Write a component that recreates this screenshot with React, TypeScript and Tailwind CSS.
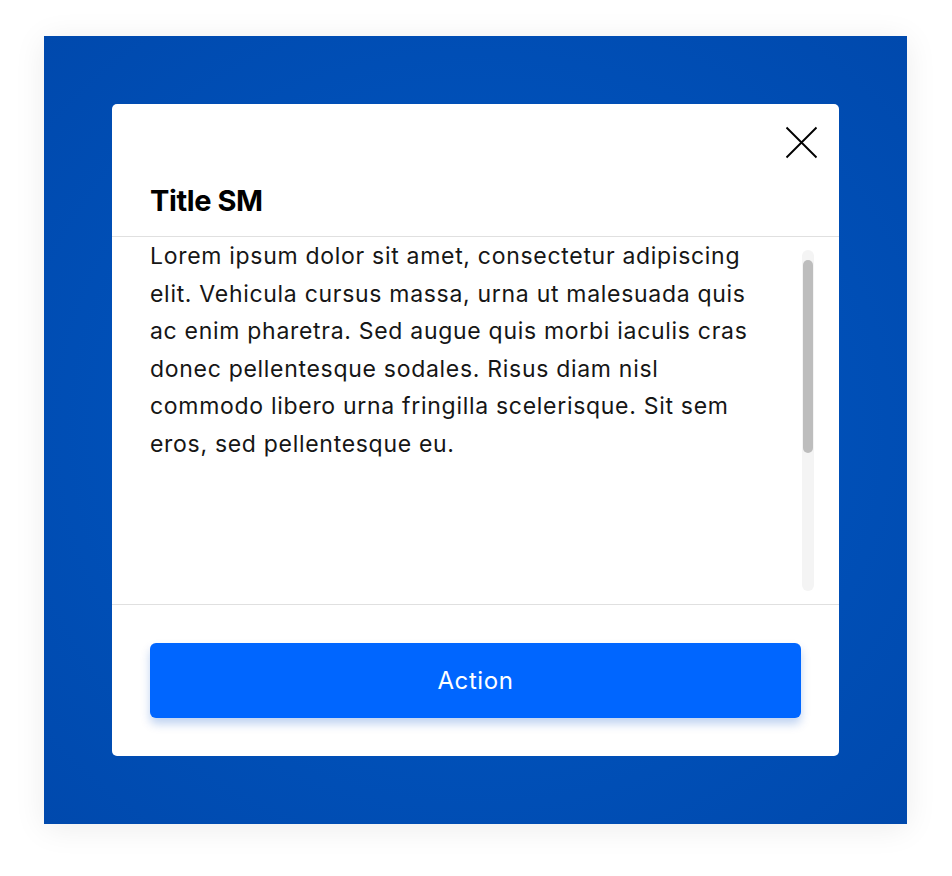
export default function App() {
  return (
    <div className="w-[952px] h-[876px] bg-white pl-[44px] pt-[36px] font-['Inter',sans-serif]">
      <div className="w-[863px] h-[788px] p-[68px] bg-[radial-gradient(ellipse_at_center,#005ccb_0%,#0050b8_55%,#0049ad_100%)] shadow-[0_4px_30px_rgba(0,0,0,0.08)]">
        <div className="relative flex flex-col w-[727px] h-[652px] bg-white rounded-[5px]">
          <button className="absolute top-[22px] right-[21px]">
            <svg className="block" width="33" height="33" viewBox="0 0 33 33" fill="none" stroke="black" strokeWidth="1.9">
              <path d="M1.5 1.5 L31.5 31.5 M31.5 1.5 L1.5 31.5" />
            </svg>
          </button>

          <div className="h-[133px] flex items-end px-[38px] pb-[18px] border-b border-[#e0e0e0]">
            <h2 className="text-[29px] leading-[34px] font-bold text-black tracking-[-0.4px]">
              Title SM
            </h2>
          </div>

          <div className="flex flex-row flex-1 min-h-0">
            <div className="flex-1 pl-[38px] pt-[1px] text-[23px] leading-[37.6px] tracking-[0.7px] text-[#161616]">
              <p>
                Lorem ipsum dolor sit amet, consectetur adipiscing <br />
                elit. Vehicula cursus massa, urna ut malesuada quis <br />
                ac enim pharetra. Sed augue quis morbi iaculis cras <br />
                donec pellentesque sodales. Risus diam nisl <br />
                commodo libero urna fringilla scelerisque. Sit sem <br />
                eros, sed pellentesque eu.
              </p>
            </div>
            <div className="w-[12px] mr-[25px] my-[13px] rounded-full bg-[#f4f4f4] p-[1px] pt-[10px]">
              <div className="h-[193px] w-full rounded-full bg-[#bdbdbd]"></div>
            </div>
          </div>

          <div className="h-[152px] flex items-center px-[38px] border-t border-[#e0e0e0]">
            <button className="w-full h-[75px] rounded-[6px] bg-[#0066ff] text-white text-[24px] tracking-[0.6px] shadow-[0_6px_10px_rgba(0,80,200,0.25)]">
              Action
            </button>
          </div>
        </div>
      </div>
    </div>
  );
}
